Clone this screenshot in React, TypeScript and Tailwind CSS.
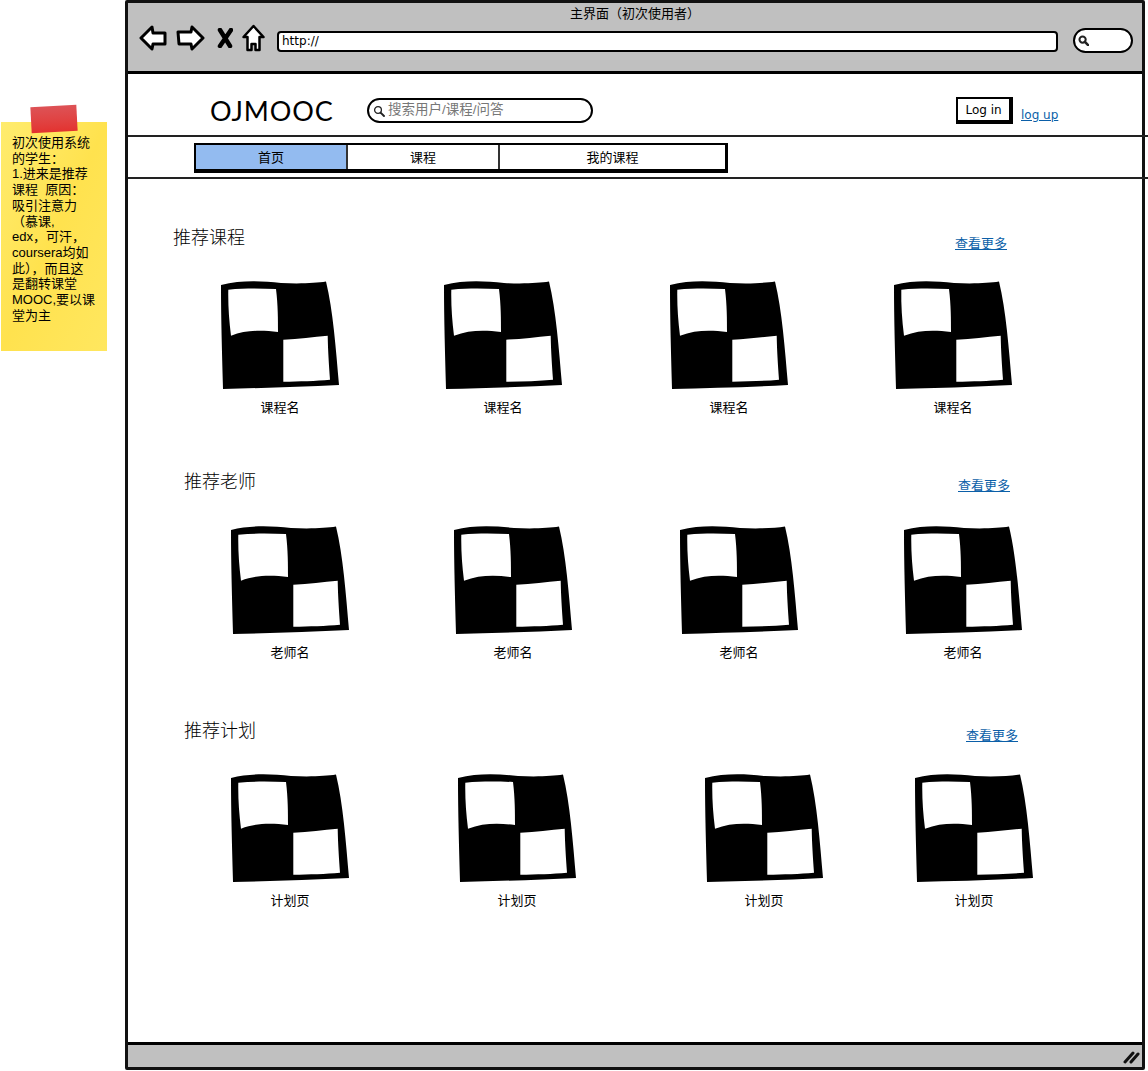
import React from 'react'

const CJK = "font-['Liberation_Sans','Noto_Sans_CJK_SC',sans-serif]"

// sketchy placeholder picture used by every card
function Tile() {
  return (
    <svg width="118" height="110" viewBox="0 0 118 110" className="block">
      <path
        fillRule="evenodd"
        d="M0 5 C20 0 40 1 60 3 C80 4 95 3 105 1.5 C112 30 115 70 118 105 C80 107 40 108 2 109 C1 70 0 40 0 5 Z M7.3 9.7 C25 8 40 8.5 55 9 C57 25 57 40 57 52 C40 50 25 50 10 55.7 C8 40 7 25 7.3 9.7 Z M62.3 59.7 C78 59 92 57 106.7 55.7 C107 72 108 85 109 99.7 C95 101 78 101.5 62.3 101.7 Z"
        fill="#000"
      />
    </svg>
  )
}

function Card({ label, className }: { label: string; className: string }) {
  return (
    <div className={`w-[118px] shrink-0 ${className}`}>
      <Tile />
      <div className="text-center text-[13px] leading-4 mt-[10px] text-black">{label}</div>
    </div>
  )
}

function BackIcon() {
  return (
    <svg width="28" height="26" viewBox="0 0 28 26">
      <path d="M2 13 L13 2 L14 8 L26 8 L26 19 L14 19 L13 24 Z" fill="#fff" stroke="#000" strokeWidth="3" strokeLinejoin="round" />
    </svg>
  )
}

function ForwardIcon() {
  return (
    <svg width="29" height="26" viewBox="0 0 29 26">
      <path d="M2 7 L15 7 L16 2 L27 13 L16 24 L15 19 L3 19 Z" fill="#fff" stroke="#000" strokeWidth="3" strokeLinejoin="round" />
    </svg>
  )
}

function StopIcon() {
  return (
    <svg width="16" height="20" viewBox="0 0 16 20">
      <path d="M3 2 L13 18 M14 2 L3 18" stroke="#000" strokeWidth="4.5" strokeLinecap="round" fill="none" />
    </svg>
  )
}

function HomeIcon() {
  return (
    <svg width="23" height="28" viewBox="0 0 23 28">
      <path d="M11.5 2 L21.5 13 L17.5 13 L17.5 26 L13.5 26 L13.5 20 L9.5 20 L9.5 26 L5.5 26 L5.5 13 L1.5 13 Z" fill="#fff" stroke="#000" strokeWidth="2.5" strokeLinejoin="round" />
    </svg>
  )
}

function Lens({ size, stroke }: { size: number; stroke: number }) {
  return (
    <svg width={size} height={size} viewBox="0 0 12 12">
      <circle cx="5" cy="5" r="3.4" fill="none" stroke="#222" strokeWidth={stroke} />
      <path d="M7.6 7.6 L11 11" stroke="#222" strokeWidth={stroke + 0.6} strokeLinecap="round" />
    </svg>
  )
}

function Section({ title, headClass, titleClass, linkClass, children }: {
  title: string; headClass: string; titleClass: string; linkClass: string; children: React.ReactNode
}) {
  return (
    <section>
      <div className={`flex items-start ${headClass}`}>
        <h2 className={`text-[18px] leading-6 font-light text-black ${titleClass}`}>{title}</h2>
        <a className={`text-[13px] leading-4 text-[#0b5fa8] underline ${linkClass}`}>查看更多</a>
      </div>
      <div className="flex">{children}</div>
    </section>
  )
}

export default function App() {
  return (
    <div className={`flex w-[1148px] h-[1071px] bg-white overflow-hidden ${CJK}`}>
      {/* sticky note */}
      <aside className="w-[125px] shrink-0 pt-[122px]">
        <div className="relative ml-[1px] w-[106px] h-[229px] bg-gradient-to-br from-[#ffec6e] via-[#ffe24e] to-[#ffe75f] pl-[11px] pt-[13px] text-[13px] leading-[15.7px] text-black">
          <div className="absolute left-[30px] top-[-16px] w-[46px] h-[26px] bg-gradient-to-b from-[#dd5256] to-[#e3322f] -rotate-3" />
          初次使用系统<br />的学生：<br />1.进来是推荐<br />课程&nbsp;&nbsp;原因：<br />吸引注意力<br />（慕课,<br />edx，可汗，<br />coursera均如<br />此），而且这<br />是翻转课堂<br />MOOC,要以课<br />堂为主
        </div>
      </aside>

      {/* browser window */}
      <div className="flex flex-col w-[1020px] h-[1070px] border-[3px] border-[#111] rounded-[2px]">
        <header className="relative h-[71px] shrink-0 bg-[#c0c0c0] border-b-[3px] border-black">
          <div className="text-center text-[13px] leading-4 pt-[3px] text-black">主界面（初次使用者）</div>
          <div className="flex items-center pl-[11px] mt-[-1px] h-[34px]">
            <BackIcon />
            <div className="ml-[9px]"><ForwardIcon /></div>
            <div className="ml-[12px]"><StopIcon /></div>
            <div className="ml-[9px]"><HomeIcon /></div>
            <div className="ml-[12px] mt-[6px] w-[781px] h-[21px] bg-white border-[2.5px] border-black rounded-[4px] flex items-center pl-[3px] font-['DejaVu_Sans'] text-[12px] text-black">http://</div>
            <div className="ml-[15px] mt-[5px] w-[60px] h-[25px] bg-white border-[2.5px] border-black rounded-full flex items-center pl-[3px]">
              <Lens size={11} stroke={2.2} />
            </div>
          </div>
        </header>

        <div className="flex items-center h-[63px] pt-[12px] shrink-0 border-b-[2px] border-[#222] w-[1021px]">
          <div className="ml-[82px] w-[157px] font-['Lato'] text-[27px] leading-8 tracking-[0.9px] text-black">OJMOOC</div>
          <div className="w-[226px] h-[25px] border-[2.5px] border-black rounded-full flex items-center pl-[4px] gap-[3px] text-[13.5px] text-[#777]">
            <Lens size={12} stroke={1.3} />
            <span>搜索用户/课程/问答</span>
          </div>
          <div className="ml-[363px] w-[57px] h-[27px] bg-white border-2 border-black border-b-[4px] border-r-[4px] flex items-center justify-center font-['DejaVu_Sans'] text-[12px] text-black">Log in</div>
          <a className="ml-[8px] mt-[8px] font-['DejaVu_Sans'] text-[12px] text-[#0b5fa8] underline">log up</a>
        </div>

        <nav className="h-[42px] shrink-0 border-b-[2px] border-[#222] w-[1021px] pl-[66px] pt-[6px]">
          <div className="flex w-[534px] h-[30px] border-2 border-black border-b-[4px] border-r-[3px] text-[13px] text-black">
            <div className="w-[152px] pt-[2px] flex items-center justify-center bg-[#93bbf0] border-r-2 border-[#333]">首页</div>
            <div className="w-[152px] pt-[2px] flex items-center justify-center border-r-2 border-[#333]">课程</div>
            <div className="flex-1 pt-[2px] flex items-center justify-center">我的课程</div>
          </div>
        </nav>

        <main className="flex-1 flex flex-col">
          <div className="mt-[47px]">
            <Section title="推荐课程" headClass="h-[54px]" titleClass="ml-[45px] w-[782px]" linkClass="mt-[10px]">
              <Card label="课程名" className="ml-[93px]" />
              <Card label="课程名" className="ml-[105px]" />
              <Card label="课程名" className="ml-[108px]" />
              <Card label="课程名" className="ml-[106px]" />
            </Section>
          </div>
          <div className="mt-[54px]">
            <Section title="推荐老师" headClass="h-[55px]" titleClass="ml-[56px] w-[774px]" linkClass="mt-[8px]">
              <Card label="老师名" className="ml-[103px]" />
              <Card label="老师名" className="ml-[105px]" />
              <Card label="老师名" className="ml-[108px]" />
              <Card label="老师名" className="ml-[106px]" />
            </Section>
          </div>
          <div className="mt-[58px]">
            <Section title="推荐计划" headClass="h-[54px]" titleClass="ml-[56px] w-[782px]" linkClass="mt-[9px]">
              <Card label="计划页" className="ml-[103px]" />
              <Card label="计划页" className="ml-[109px]" />
              <Card label="计划页" className="ml-[129px]" />
              <Card label="计划页" className="ml-[92px]" />
            </Section>
          </div>
        </main>

        <footer className="h-[25px] shrink-0 bg-[#c0c0c0] border-t-[3px] border-black flex justify-end items-center pr-[2px] pt-[2px]">
          <svg width="17" height="14" viewBox="0 0 17 14">
            <path d="M2 12 L10 3 M8 12 L15 4" stroke="#111" strokeWidth="3" strokeLinecap="round" fill="none" />
          </svg>
        </footer>
      </div>
    </div>
  )
}
